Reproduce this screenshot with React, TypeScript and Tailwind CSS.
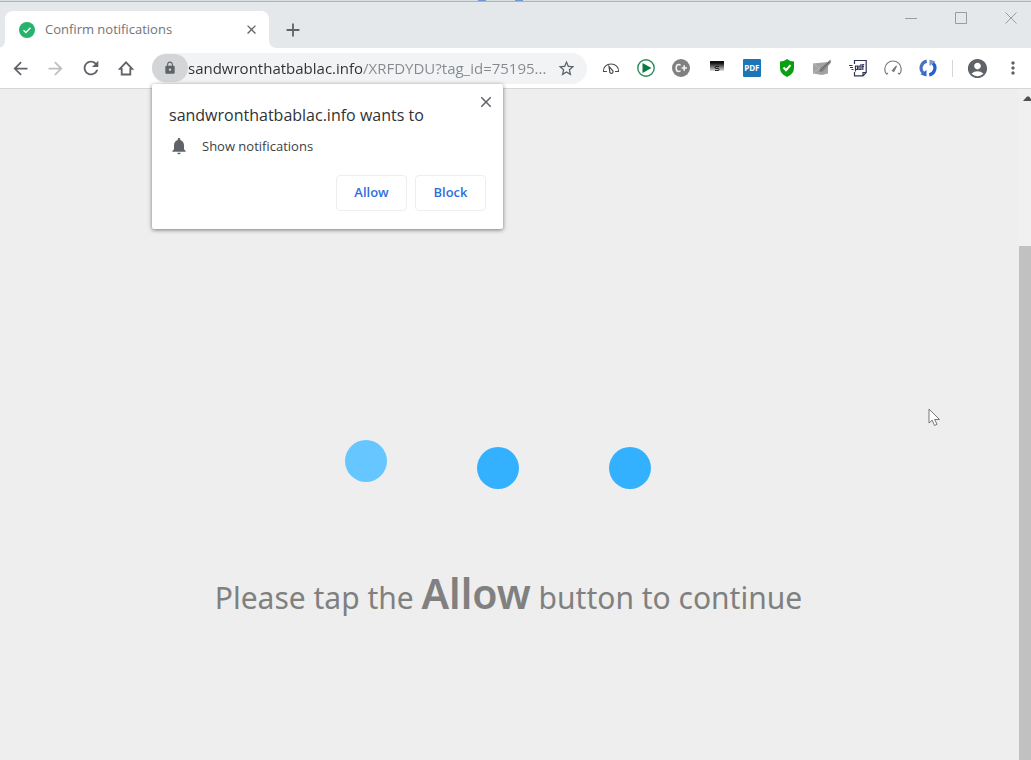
import type { ReactNode } from "react";
import {
  MdAccountCircle,
  MdAdd,
  MdArrowBack,
  MdArrowForward,
  MdClose,
  MdLock,
  MdMoreVert,
  MdNotifications,
  MdRefresh,
  MdStarBorder,
} from "react-icons/md";

type Extension = { name: string; icon: ReactNode };

const extensions: Extension[] = [
  {
    name: "Speed dial",
    icon: (
      <svg width="18" height="18" viewBox="0 0 18 18" fill="none" stroke="#4a4d50" strokeWidth="1.2">
        <path d="M5 12.500H1.500C1 8 4.500 5 9 5S17 8 16.500 12.500H13" />
        <path d="M7 7.500 10.400 11.300A1.700 1.700 0 1 1 7.700 12.200Z" />
      </svg>
    ),
  },
  {
    name: "Video player",
    icon: (
      <svg width="18" height="18" viewBox="0 0 18 18">
        <circle cx="9" cy="9" r="8.200" fill="#fff" stroke="#2c8a5c" strokeWidth="1.4" />
        <path d="M5.500 4 14.500 9 5.500 14Z" fill="#0a7a3f" />
      </svg>
    ),
  },
  {
    name: "C plus",
    icon: (
      <svg width="18" height="18" viewBox="0 0 18 18" fill="none" stroke="#f2f2f2" strokeWidth="1.600">
        <circle cx="9" cy="9" r="9" fill="#808080" stroke="none" />
        <path d="M8.500 6.500Q8 5.500 6.500 5.500 4.200 5.500 4.200 9T6.500 12.500Q8 12.500 8.500 11.500M9.500 9H15M12.200 6.200V11.800" />
      </svg>
    ),
  },
  {
    name: "Screen saver",
    icon: (
      <svg width="14" height="18" viewBox="0 0 14 18">
        <defs>
          <linearGradient id="saver" x1="0" y1="0" x2="0" y2="1">
            <stop offset="0.2" stopColor="#111" />
            <stop offset="1" stopColor="#e0e0e0" />
          </linearGradient>
        </defs>
        <path d="M0 2H14V12H0Z" fill="url(#saver)" />
        <path d="M9 7.500H6Q5 7.500 5 8.500T6 9.500H8Q9 9.500 9 10.500T8 11.500H5" fill="none" stroke="#222" />
      </svg>
    ),
  },
  {
    name: "PDF",
    icon: (
      <span className="flex size-[18px] items-center justify-center rounded-[1px] bg-[#1b76b8] text-[8px] font-bold text-white">
        PDF
      </span>
    ),
  },
  {
    name: "Web shield",
    icon: (
      <svg width="16" height="18" viewBox="0 0 16 18">
        <path d="M8 0Q11 2.500 15 2.500V9Q15 15 8 18 1 15 1 9V2.500Q5 2.500 8 0Z" fill="#0a9f10" />
        <path d="m4.500 8.500 2.500 2.700 4.500-5" fill="none" stroke="#fff" strokeWidth="2" />
      </svg>
    ),
  },
  {
    name: "Mail",
    icon: (
      <svg width="18" height="18" viewBox="0 0 18 18">
        <path d="M0 4.500 15 3V14.500L9 16 0 14.500Z" fill="#a3a3a3" />
        <path d="m0 4.500 7 5.500M0 14.500 6.500 9" stroke="#b8b8b8" fill="none" />
        <path d="M17.500.5 18 3.500 10 12.500 6 13 7.500 9Z" fill="#858585" />
        <path d="M16.500 2.500 7 12" stroke="#666" />
      </svg>
    ),
  },
  {
    name: "Convert to pdf",
    icon: (
      <svg width="18" height="18" viewBox="0 0 18 18" fill="none" stroke="#2f3559" strokeWidth="1.200">
        <path d="M5.500 5V1.500H17.200V13.500L14 16.800H5.500V13M17 13.500H14V16.500" />
        <path d="M0 6.500H3.500M1 8.500H4M2.500 10.500H4.500" />
        <path d="M6.500 12.500V7H8.500V10.500H6.500M12 5V10.500H10V7H12M13.800 11V5.500H15.200M13 7.500H15" />
      </svg>
    ),
  },
  {
    name: "Speed test",
    icon: (
      <svg width="18" height="18" viewBox="0 0 18 18" fill="none" stroke="#77797c" strokeWidth="1.2">
        <path d="M2.500 15.200A8.200 8.200 0 1 1 15.500 15.200M2.500 15.200 4 14M15.500 15.200 14 14" />
        <path d="M8.500 11.500 12.500 7 9.800 12.300Z" fill="#5b5d60" />
      </svg>
    ),
  },
  {
    name: "Sync",
    icon: (
      <svg width="18" height="18" viewBox="0 0 18 18" fill="none" strokeWidth="3.200">
        <path d="M7.800 2.100A7 7 0 0 0 4.200 14" stroke="#4a72ba" />
        <path d="M10.200 15.900A7 7 0 0 0 13.800 4" stroke="#2460cd" />
        <path d="M1.500 15.500 7.500 17.500 7.500 11Z" fill="#2e69cf" />
        <path d="M16.500 2.500 10.500.5 10.500 7Z" fill="#7896c8" />
      </svg>
    ),
  },
];

function TitleBar() {
  return (
    <header className="relative flex h-12 items-end border-t border-[#d9dfe0] bg-[#e4e8eb] pl-[5px] shadow-[inset_0_1px_0_#aeb3b3]">
      <div className="relative flex h-[37px] w-[264px] items-center rounded-t-lg bg-white pr-[10px] pl-[14px]">
        <svg width="16" height="16" viewBox="0 0 16 16">
          <circle cx="8" cy="8" r="8" fill="#27b36b" />
          <path d="m4.500 8.200 2.300 2.300 4.700-4.700" fill="none" stroke="#fff" strokeWidth="1.300" />
        </svg>
        <h1 className="flex-1 pl-[10px] text-[13px] text-[#717477]">Confirm notifications</h1>
        <button type="button" aria-label="Close tab" className="text-[#5f6368]">
          <MdClose size={15} />
        </button>
        {/* flared feet of the active tab */}
        <svg className="absolute right-full bottom-0" width="8" height="8" viewBox="0 0 8 8"><path d="M8 0V8H0Q8 8 8 0Z" fill="#fff" /></svg>
        <svg className="absolute bottom-0 left-full" width="8" height="8" viewBox="0 0 8 8"><path d="M0 0V8H8Q0 8 0 0Z" fill="#fff" /></svg>
      </div>
      <button type="button" aria-label="New tab" className="flex h-[37px] w-12 items-center justify-center text-[#5f6368]">
        <MdAdd size={22} />
      </button>
      <div className="ml-auto flex gap-[38px] self-start pt-[11px] pr-[14px] text-[#999da0]">
        <button type="button" aria-label="Minimize">
          <svg width="12" height="12" viewBox="0 0 12 12" stroke="currentColor"><path d="M0 6.500H12" /></svg>
        </button>
        <button type="button" aria-label="Maximize">
          <svg width="12" height="12" viewBox="0 0 12 12" fill="none" stroke="currentColor"><path d="M.5.5H11.500V11.500H.5Z" /></svg>
        </button>
        <button type="button" aria-label="Close window">
          <svg width="12" height="12" viewBox="0 0 12 12" stroke="currentColor"><path d="m.5.500 11 11M11.500.5l-11 11" /></svg>
        </button>
      </div>
      {/* sliver of the window behind */}
      <div className="absolute -top-px left-[478px] flex gap-[29px]">
        <span className="h-px w-2 bg-[#6f97d8]" />
        <span className="h-px w-2 bg-[#6f97d8]" />
      </div>
    </header>
  );
}

function PermissionPrompt() {
  return (
    <div
      role="dialog"
      aria-labelledby="prompt-title"
      className="absolute top-full left-0 z-10 w-[351px] rounded-xs bg-white px-[17px] pt-5 pb-[18px] shadow-[0_1px_4px_rgba(0,0,0,0.5)]"
    >
      <button type="button" aria-label="Dismiss" className="absolute top-[9px] right-2 text-[#5f6368]">
        <MdClose size={18} />
      </button>
      <h2 id="prompt-title" className="text-base leading-[22px] text-[#303235]">
        sandwronthatbablac.info wants to
      </h2>
      <p className="mt-[10px] flex items-center gap-[13px] text-[13px] leading-5 text-[#3c3f42]">
        <MdNotifications size={20} className="text-[#5f6368]" />
        Show notifications
      </p>
      <div className="mt-[19px] flex justify-end gap-2 text-[13px] font-semibold text-[#2f6fdc]">
        <button type="button" className="h-9 w-[71px] rounded-sm border border-[#eceef0]">Allow</button>
        <button type="button" className="h-9 w-[71px] rounded-sm border border-[#eceef0]">Block</button>
      </div>
    </div>
  );
}

function Toolbar() {
  return (
    <div className="flex h-[41px] items-center border-b border-[#d5d6d7] bg-white pr-2 pl-[3px] text-[#5f6368]">
      <nav className="flex items-center">
        <button type="button" aria-label="Back" className="flex w-[35px] justify-center"><MdArrowBack size={21} /></button>
        <button type="button" aria-label="Forward" className="flex w-[35px] justify-center text-[#bcbec0]"><MdArrowForward size={21} /></button>
        <button type="button" aria-label="Reload" className="flex w-[35px] justify-center"><MdRefresh size={22} /></button>
        <button type="button" aria-label="Home" className="flex w-[35px] justify-center">
          <svg width="16" height="16" viewBox="0 0 16 16" fill="none" stroke="currentColor" strokeWidth="1.800">
            <path d="M1.800 8.800 8 2.300 14.200 8.800H12.300V14.500H3.700V8.800Z" />
          </svg>
        </button>
      </nav>
      <div className="relative ml-[9px] flex h-[31px] flex-1 items-center rounded-full bg-[#f1f3f4] pr-[11px]">
        <button type="button" aria-label="Site information" className="flex h-7 w-9 items-center justify-center rounded-full bg-[#d3d5d6]">
          <MdLock size={14} />
        </button>
        {/* host is dark, the path after it is grey */}
        <input
          type="text"
          aria-label="Address"
          defaultValue="sandwronthatbablac.info/XRFDYDU?tag_id=75195..."
          className="min-w-0 flex-1 bg-linear-to-r from-[#2d3033] from-[174px] to-[#85898d] to-[174px] bg-clip-text text-[15px] text-transparent outline-none"
        />
        <button type="button" aria-label="Bookmark"><MdStarBorder size={19} /></button>
        <PermissionPrompt />
      </div>
      <ul className="ml-[6px] grid w-[353px] grid-cols-10">
        {extensions.map((ext) => (
          <li key={ext.name} className="flex items-center justify-center">
            <button type="button" aria-label={ext.name}>{ext.icon}</button>
          </li>
        ))}
      </ul>
      <div className="ml-[6px] h-[17px] w-px bg-[#d4d6d8]" />
      <button type="button" aria-label="Profile" className="ml-[13px]"><MdAccountCircle size={23} /></button>
      <button type="button" aria-label="Menu" className="ml-[14px]"><MdMoreVert size={20} /></button>
    </div>
  );
}

export default function App() {
  return (
    <div className="flex min-h-screen flex-col bg-[#eee] font-['Open_Sans','Noto_Sans',sans-serif]">
      <TitleBar />
      <Toolbar />
      <div className="relative flex flex-1">
        <main className="flex flex-1 flex-col items-center pt-[358px] pr-[2px] font-['Noto_Sans','Open_Sans',sans-serif] text-[#808080]">
          <div className="flex gap-[90px] pr-[22px]">
            <span className="size-[42px] -translate-y-[7px] rounded-full bg-[#66c6ff]" />
            <span className="size-[42px] rounded-full bg-[#33b1ff]" />
            <span className="size-[42px] rounded-full bg-[#33b1ff]" />
          </div>
          <p className="mt-[72px] text-[30px] leading-[64px]">
            Please tap the <strong className="text-[41px] font-semibold">Allow</strong> button to continue
          </p>
        </main>
        <div className="flex w-3 flex-col bg-[#f0f0f0]">
          <svg width="12" height="157" viewBox="0 0 12 157"><path d="M4 12 8 7.500H10L12 10V12Z" fill="#505050" /></svg>
          <div className="flex-1 bg-[#c1c1c1]" />
        </div>
        <svg className="absolute top-[319px] right-[90px]" width="13" height="19" viewBox="0 0 13 19" fill="#fff" stroke="#777">
          <path d="M1 1V15L4.200 12.200 6.500 17.500 9 16.300 6.700 11.500H11.500Z" />
        </svg>
      </div>
    </div>
  );
}
